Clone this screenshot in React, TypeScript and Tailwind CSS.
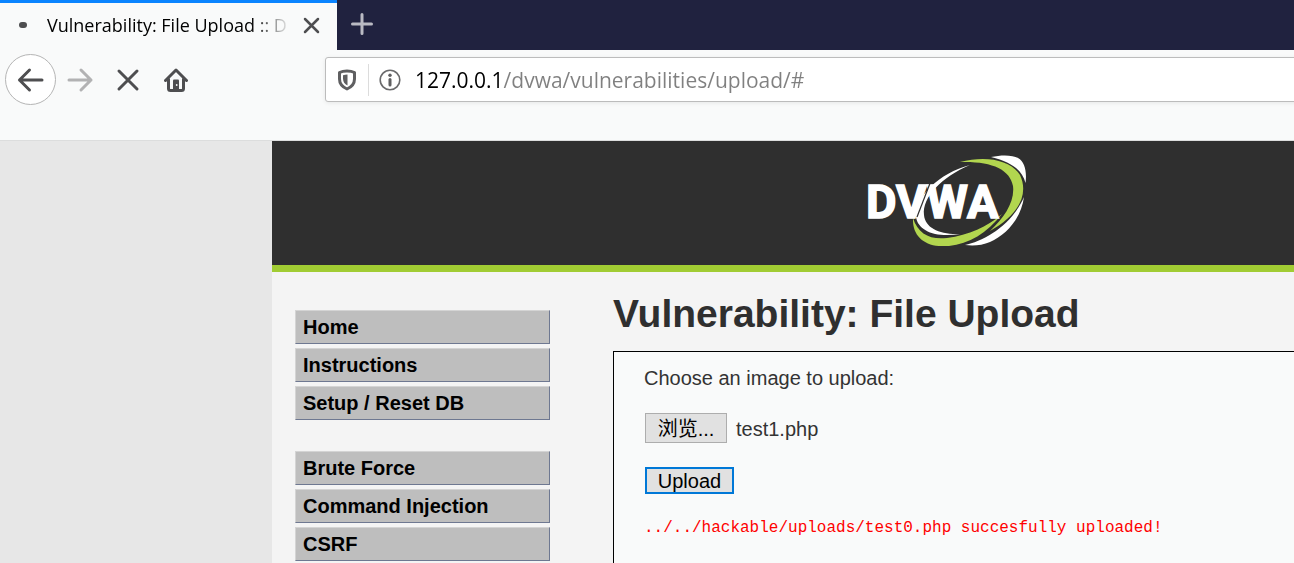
import { useState } from "react";

const menuGroups = [
  ["Home", "Instructions", "Setup / Reset DB"],
  ["Brute Force", "Command Injection", "CSRF"],
];

function BackIcon() {
  return (
    <svg className="size-7" viewBox="0 0 28 28" fill="none" stroke="#4e4e50" strokeWidth="3" strokeLinecap="round" strokeLinejoin="round">
      <path d="M25 14H2.500M12.500 4l-10 10 10 10" />
    </svg>
  );
}

function ForwardIcon() {
  return (
    <svg className="size-7" viewBox="0 0 28 28" fill="none" stroke="#b2b2b3" strokeWidth="3" strokeLinecap="round" strokeLinejoin="round">
      <path d="M3 14h22M15 4l10 10-10 10" />
    </svg>
  );
}

function StopIcon() {
  return (
    <svg className="size-6" viewBox="0 0 24 24" fill="none" stroke="#4e4e50" strokeWidth="3" strokeLinecap="round">
      <path d="m3 3 18 18M21 3 3 21" />
    </svg>
  );
}

function HomeIcon() {
  return (
    <svg className="size-6" viewBox="0 0 24 24" fill="none" stroke="#4e4e50" strokeWidth="3" strokeLinecap="round" strokeLinejoin="round">
      <path d="M1.500 12.500 12 2l10.500 10.500M4.500 11v9.500a2 2 0 0 0 2 2h11a2 2 0 0 0 2-2V11" />
      <path d="M9 22v-9.500q0-1 1-1h4q1 0 1 1V22z" fill="#4e4e50" stroke="none" />
      <circle cx="12.700" cy="17" r="0.900" fill="#f9fafa" stroke="none" />
    </svg>
  );
}

function ShieldIcon() {
  return (
    <svg className="h-[22px] w-5" viewBox="0 0 20 22" fill="none">
      <path d="M10 2Q5.500 2 2.500 3.500V10c0 5 3 8 7.500 10 4.500-2 7.500-5 7.500-10V3.500Q14.500 2 10 2Z" stroke="#5f5f61" strokeWidth="3" strokeLinejoin="round" />
      <path d="M10.500 5.500v11C7.500 15 6 12.800 6 9.500V6.200q2-.7 4.500-.7Z" fill="#5f5f61" />
    </svg>
  );
}

function InfoIcon() {
  return (
    <svg className="size-[22px]" viewBox="0 0 22 22" fill="none">
      <circle cx="11" cy="11" r="9.800" stroke="#6a6a6c" strokeWidth="1.600" />
      <circle cx="11" cy="6.200" r="1.700" fill="#5f5f61" />
      <path d="M11 10.500v5.500" stroke="#5f5f61" strokeWidth="3" strokeLinecap="round" />
    </svg>
  );
}

function DvwaLogo() {
  return (
    <svg className="h-[91px] w-[160px]" viewBox="0 0 160 91" role="img" aria-label="DVWA">
      <path d="M124 2C135-.5 146 0 151 3c7 4 9 14 7.500 25-3-12-13-21-34.500-26Z" fill="#fff" />
      <path d="M93 7C119 0 144 5 153 20c9 19-1 40-30 56 14-13 25-29 23-45C143 14 124 6 93 7Z" fill="#b2d64f" />
      <path d="M157 42c-3 22-18 38-34 45-8 3.500-17 4-25 3 19-4 47-20 59-48Z" fill="#fff" />
      <path d="M46 63c5 16 17 22 34 20 22-3 40-11 55-24-15 19-33 30-53 32C59 93 45 82 46 63Z" fill="#b2d64f" />
      <path d="M103 10C75 22 55 42 57 60c1 13 16 20 36 19-24 4-42-3-44-17C48 42 72 18 103 10Z" fill="#fff" />
      <text x="-1" y="63" fill="#fff" stroke="#fff" strokeWidth="1.500" fontFamily="Roboto, sans-serif" fontWeight="700" fontSize="47">
        DVWA
      </text>
      <path d="M63.500 27 50 62" stroke="#2f2f2f" strokeWidth="1.200" />
    </svg>
  );
}

export default function App() {
  const [address, setAddress] = useState("127.0.0.1/dvwa/vulnerabilities/upload/#");
  const [fileName, setFileName] = useState("test1.php");

  return (
    <div className="flex h-screen flex-col overflow-hidden bg-[#e7e7e7] font-['Liberation_Sans','Noto_Sans_CJK_SC',sans-serif]">
      <header className="shrink-0 border-b border-[#dcdddd] bg-[#f9fafa] font-['Open_Sans','Noto_Sans_CJK_SC',sans-serif]">
        <div className="flex h-[50px] bg-[#20223f]">
          <div className="flex w-[337px] items-center border-t-3 border-[#0a84ff] bg-[#f9fafa] pr-4 pb-1 pl-[19px]">
            <span className="h-[6px] w-2 shrink-0 rounded-full bg-[#4e4e50]" />
            <span className="ml-5 bg-linear-to-r from-black from-85% to-black/10 bg-clip-text text-[18px] leading-7 whitespace-nowrap text-transparent">
              Vulnerability: File Upload :: D
            </span>
            <button type="button" aria-label="Close tab" className="ml-auto shrink-0">
              <svg className="size-5" viewBox="0 0 20 20" fill="none" stroke="#4e4e50" strokeWidth="2.500" strokeLinecap="round">
                <path d="m4 4 13 13M17 4 4 17" />
              </svg>
            </button>
          </div>
          <button type="button" aria-label="New tab" className="flex w-[50px] items-center justify-center pb-0.5">
            <svg className="size-6" viewBox="0 0 24 24" fill="none" stroke="#b9bac3" strokeWidth="3" strokeLinecap="round">
              <path d="M12 2.500v19M2.500 12h19" />
            </svg>
          </button>
        </div>

        <div className="flex h-[90px] pt-1 pl-[5px]">
          <nav className="flex h-[51px] w-[320px] shrink-0 items-center">
            <button type="button" aria-label="Back" className="flex size-[51px] items-center justify-center rounded-full border border-[#b5b5b5] bg-white">
              <BackIcon />
            </button>
            <button type="button" aria-label="Forward" className="ml-[10px]"><ForwardIcon /></button>
            <button type="button" aria-label="Stop" className="ml-[22px]"><StopIcon /></button>
            <button type="button" aria-label="Home" className="ml-6"><HomeIcon /></button>
          </nav>
          <div className="-mr-2 mt-[3px] flex h-[45px] flex-1 items-center rounded-[3px] border border-[#bcbcbc] bg-white pl-[11px] shadow-[0_1px_4px_rgba(0,0,0,0.08)]">
            <ShieldIcon />
            <span className="ml-[11px] h-8 w-px bg-[#dcdcdc]" />
            <span className="ml-[10px]"><InfoIcon /></span>
            <input
              type="text"
              aria-label="Address"
              value={address}
              onChange={(e) => setAddress(e.target.value)}
              className="ml-[14px] h-9 flex-1 bg-[linear-gradient(to_right,#000_88px,#808080_88px)] bg-clip-text text-[21px] text-transparent caret-black outline-none"
            />
          </div>
        </div>
      </header>

      <div className="flex flex-1 overflow-hidden pl-[272px]">
        <div className="flex min-w-[1350px] flex-1 flex-col bg-[#f4f4f4]">
          <div className="flex h-[131px] shrink-0 justify-center border-b-7 border-[#a1cc33] bg-[#2f2f2f] pt-[14px]">
            <DvwaLogo />
          </div>
          <div className="flex flex-1">
            <nav className="flex w-[341px] shrink-0 flex-col gap-[31px] pt-[38px] pl-[23px]">
              {menuGroups.map((group) => (
                <ul key={group[0]} className="flex flex-col gap-1">
                  {group.map((item) => (
                    <li key={item}>
                      <a href="#" className="block h-[34px] w-[255px] border border-t-[#d4d4d4] border-r-[#6e7891] border-b-[#6e7891] border-l-[#d4d4d4] bg-[#bebebe] pl-[7px] text-[20px] leading-8 font-bold text-black">
                        {item}
                      </a>
                    </li>
                  ))}
                </ul>
              ))}
            </nav>
            <main className="flex flex-1 flex-col pt-[18px] pr-6">
              <h1 className="text-[39px] leading-[48px] font-bold text-[#2f2f2f]">Vulnerability: File Upload</h1>
              <form className="mt-[13px] flex flex-1 flex-col items-start border border-b-0 border-black bg-[#f9fafa] pt-3 pl-[30px]" onSubmit={(e) => e.preventDefault()}>
                <p className="text-[20px] leading-7 text-[#333]">Choose an image to upload:</p>
                <div className="mt-[21px] flex h-[30px] items-center text-[20px] text-[#333]">
                  <input id="uploaded" type="file" className="sr-only" onChange={(e) => setFileName(e.target.files?.[0]?.name ?? fileName)} />
                  <label htmlFor="uploaded" className="ml-px flex h-[30px] w-[82px] items-center justify-center border border-[#adadad] bg-[#e1e1e1] pt-0.5 text-black">
                    浏览...
                  </label>
                  <span className="ml-[9px] pt-0.5">{fileName}</span>
                </div>
                <button type="submit" className="mt-6 ml-px h-[27px] w-[89px] border-2 border-[#0078d7] bg-[#e1e1e1] text-[20px] leading-none text-black">
                  Upload
                </button>
                <pre className="mt-[22px] font-['Liberation_Mono',monospace] text-[16px] leading-6 text-[#f00]">../../hackable/uploads/test0.php succesfully uploaded!</pre>
              </form>
            </main>
          </div>
        </div>
      </div>
    </div>
  );
}
